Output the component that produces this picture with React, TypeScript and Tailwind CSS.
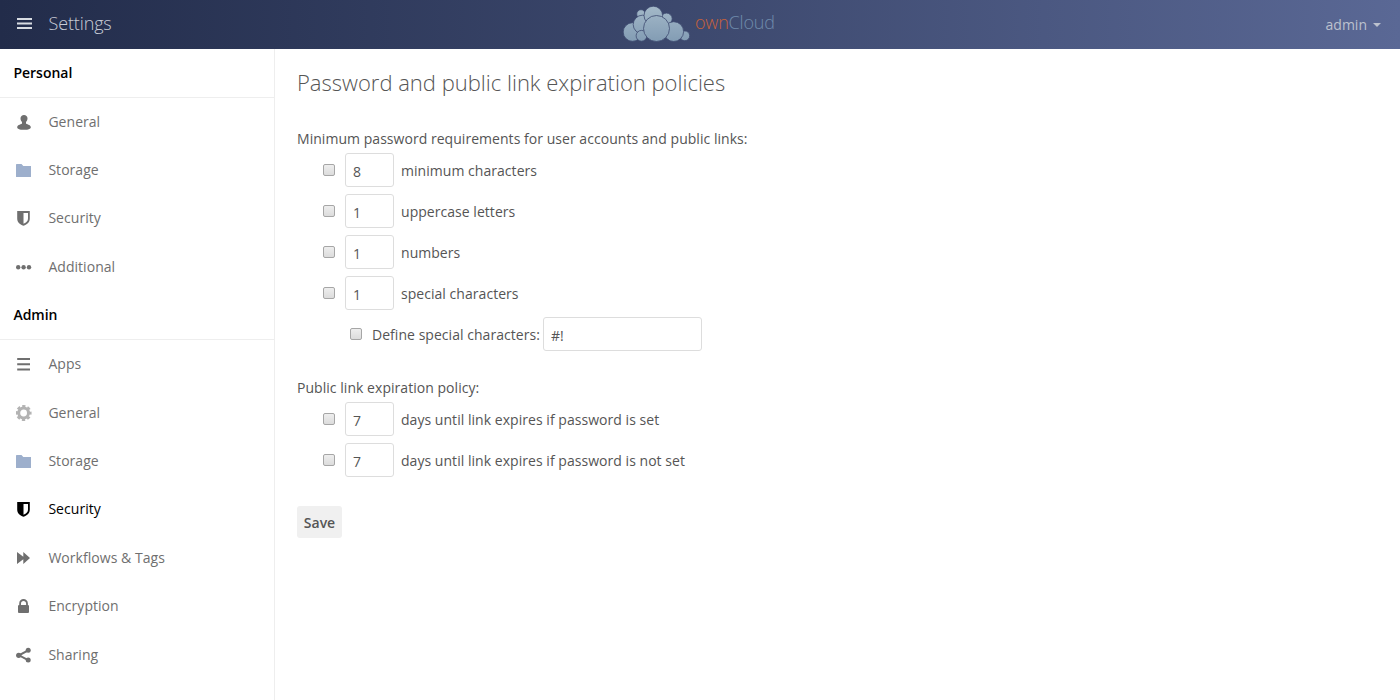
import React from "react";

type IconName = "user" | "folder" | "shield" | "more" | "list" | "gear" | "forward" | "lock" | "share";

function Icon({ name }: { name: IconName }) {
  const shapes: Record<IconName, React.ReactNode> = {
    user: (
      <path d="M8 1C6 1 4.500 2.400 4.500 4.300C4.500 5.900 5.200 7.200 6 8V9.400C5.800 10.200 1.500 10.600 1.200 12.900C1 14.800 3.500 15.700 8 15.700C12.500 15.700 15 14.800 14.800 12.900C14.500 10.600 10.200 10.200 10 9.400V8C10.800 7.200 11.500 5.900 11.500 4.300C11.500 2.400 10 1 8 1Z" />
    ),
    folder: <path fill="#9dafcc" d="M0 2.700Q0 2 .7 2H5.500L7.300 4H15V14.500Q15 15 14.500 15H.5Q0 15 0 14.500Z" />,
    shield: (
      <path
        fillRule="evenodd"
        d="M1.200 1H13.800V8.500C13.800 12.200 11.500 14.300 7.500 15.800C3.500 14.300 1.200 12.200 1.200 8.500ZM7.500 2.900V13.700C10.500 12.500 12 11 12 8.500V2.900Z"
      />
    ),
    more: (
      <>
        <circle cx="2.200" cy="8.300" r="2.200" />
        <circle cx="7.600" cy="8.300" r="2.200" />
        <circle cx="13" cy="8.300" r="2.200" />
      </>
    ),
    list: <path d="M1.200 2H14V4H1.200ZM1.200 7.300H14V9.300H1.200ZM1.200 12.500H14V14.500H1.200Z" />,
    gear: (
      <g fill="none" stroke="#b3b3b3">
        <circle cx="7.600" cy="8" r="4.900" strokeWidth="3" />
        <circle cx="7.600" cy="8" r="6.800" strokeWidth="2.400" strokeDasharray="3.200 2.141" strokeDashoffset="1.600" />
      </g>
    ),
    forward: <path d="M1 2L7.300 6.800V2L14 8L7.300 14V9.200L1 14Z" />,
    lock: (
      <path
        fillRule="evenodd"
        d="M3.200 7V5.500C3.200 2.700 5.200 1 7.500 1S11.900 2.700 11.900 5.500V7Q13 7 13 8V14Q13 15 12 15H3Q2 15 2 14V8Q2 7 3.200 7ZM5 7H10.100V5.500C10.100 3.900 9 2.900 7.500 2.900S5 3.900 5 5.500Z"
      />
    ),
    share: (
      <>
        <path d="M12.200 3.300L3 8.300L12.200 13.100" fill="none" stroke="currentColor" strokeWidth="2" />
        <circle cx="12.200" cy="3.300" r="2.500" />
        <circle cx="2.700" cy="8.300" r="2.600" />
        <circle cx="12.200" cy="13.100" r="2.500" />
      </>
    ),
  };
  return (
    <svg className="size-4 shrink-0" viewBox="0 0 16 16" fill="currentColor" aria-hidden="true">
      {shapes[name]}
    </svg>
  );
}

function CloudLogo() {
  return (
    <svg className="h-[44px] w-[74px] shrink-0" viewBox="0 0 74 44" aria-hidden="true">
      <defs>
        <linearGradient id="cloud" gradientUnits="userSpaceOnUse" x1="0" y1="4" x2="0" y2="40">
          <stop offset="0" stopColor="#a3b8c8" />
          <stop offset="1" stopColor="#819bb3" />
        </linearGradient>
      </defs>
      <g fill="url(#cloud)" stroke="#3e4a70" strokeWidth="0.8">
        <circle cx="21" cy="11" r="4.300" />
        <circle cx="46.500" cy="15.800" r="5.700" />
        <circle cx="12.500" cy="29" r="9.300" />
        <circle cx="22.500" cy="21.500" r="9.300" />
        <circle cx="33.300" cy="12.500" r="9.300" />
        <circle cx="21.500" cy="32.800" r="5.400" />
        <circle cx="64.800" cy="32.800" r="4.900" />
        <circle cx="53.700" cy="28.600" r="9.900" />
        <circle cx="36.500" cy="25.500" r="13" />
      </g>
    </svg>
  );
}

function SectionTitle({ children, tall = false }: { children: React.ReactNode; tall?: boolean }) {
  return (
    <h2
      className={`flex items-center border-b border-[#eee] pl-[13.4px] font-semibold text-black ${tall ? "h-[49.1px]" : "h-[48.5px]"}`}
    >
      {children}
    </h2>
  );
}

function NavItem({ icon, label, active = false }: { icon: IconName; label: string; active?: boolean }) {
  return (
    <a className={`flex h-[48.375px] items-center gap-[16.4px] pl-4 ${active ? "text-black" : "text-[#6f6f6f]"}`}>
      <Icon name={icon} />
      <span className="tracking-[0.04px]">{label}</span>
    </a>
  );
}

function Check() {
  return (
    <input
      type="checkbox"
      className="size-3 shrink-0 appearance-none rounded-[2px] border border-[#a6a6a6] bg-linear-to-b from-[#eee] to-[#dcdcdc]"
    />
  );
}

function Field({ value, wide = false }: { value: string; wide?: boolean }) {
  return (
    <input
      type="text"
      defaultValue={value}
      className={`h-[34px] shrink-0 rounded-[3px] border border-[#ddd] bg-white pt-[3px] pl-[7px] text-[#555] outline-none ${wide ? "w-[159px]" : "w-[49px]"}`}
    />
  );
}

function PolicyRow({ value, label }: { value: string; label: string }) {
  return (
    <div className="flex h-[41px] items-center pl-[26px]">
      <Check />
      <div className="ml-[10px] flex items-center gap-[7px]">
        <Field value={value} />
        <span className="pt-0.5">{label}</span>
      </div>
    </div>
  );
}

export default function App() {
  return (
    <div className="flex h-[700px] w-[1400px] flex-col overflow-hidden bg-white font-['Open_Sans',sans-serif] text-[14px] leading-5">
      <header className="grid h-[49px] shrink-0 grid-cols-[620px_1fr_auto] items-center bg-linear-to-r from-[#222c4a] to-[#5a6895] pr-[19px]">
        <div className="flex items-center pb-[3px] pl-[17px]">
          <svg className="h-[11px] w-[15px]" viewBox="0 0 15 11" fill="#d8dce2" aria-hidden="true">
            <path d="M0 0H15V2H0ZM0 4.500H15V6.500H0ZM0 9H15V11H0Z" />
          </svg>
          <span className="pl-[16.6px] text-[18px] font-light tracking-[-0.15px] text-[#c8ccd6]">Settings</span>
        </div>
        <div className="flex items-center">
          <CloudLogo />
          <span className="pb-[5px] pl-px text-[18px] font-light tracking-[-0.2px] text-[#6f8bac]">
            <span className="text-[#c9623a]">own</span>Cloud
          </span>
        </div>
        <div className="flex items-center gap-[6px] text-[#bcc1ce]">
          <span>admin</span>
          <svg className="h-1 w-2" viewBox="0 0 8 4" fill="currentColor" aria-hidden="true">
            <path d="M0 0H8L4 4Z" />
          </svg>
        </div>
      </header>
      <div className="flex min-h-0 flex-1">
        <nav className="w-[275px] shrink-0 border-r border-[#eee]">
          <SectionTitle>Personal</SectionTitle>
          <NavItem icon="user" label="General" />
          <NavItem icon="folder" label="Storage" />
          <NavItem icon="shield" label="Security" />
          <NavItem icon="more" label="Additional" />
          <SectionTitle tall>Admin</SectionTitle>
          <NavItem icon="list" label="Apps" />
          <NavItem icon="gear" label="General" />
          <NavItem icon="folder" label="Storage" />
          <NavItem icon="shield" label="Security" active />
          <NavItem icon="forward" label="Workflows & Tags" />
          <NavItem icon="lock" label="Encryption" />
          <NavItem icon="share" label="Sharing" />
        </nav>
        <main className="flex-1 pt-[18px] pl-[22px] text-[#555]">
          <h1 className="text-[22px] leading-[30px] font-light">Password and public link expiration policies</h1>
          <div className="tracking-[0.04px]">
            <p className="mt-8">Minimum password requirements for user accounts and public links:</p>
            <PolicyRow value="8" label="minimum characters" />
            <PolicyRow value="1" label="uppercase letters" />
            <PolicyRow value="1" label="numbers" />
            <PolicyRow value="1" label="special characters" />
            <div className="flex h-[41px] items-center pl-[53px]">
              <Check />
              <span className="ml-[10px] w-[171px] pt-0.5">Define special characters:</span>
              <Field value="#!" wide />
            </div>
            <p className="mt-6">Public link expiration policy:</p>
            <PolicyRow value="7" label="days until link expires if password is set" />
            <PolicyRow value="7" label="days until link expires if password is not set" />
          </div>
          <button className="mt-[26px] h-8 w-[45px] rounded-[3px] bg-[#f0f0f0] pt-0.5 font-semibold">Save</button>
        </main>
      </div>
    </div>
  );
}
